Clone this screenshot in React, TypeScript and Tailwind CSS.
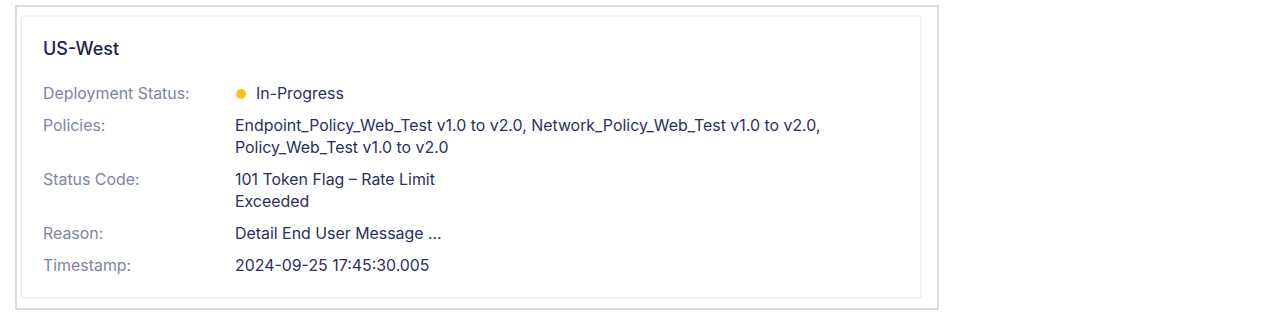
import React from 'react';

const rows: { label: string; value: React.ReactNode }[] = [
  {
    label: 'Deployment Status:',
    value: (
      <span className="flex items-center gap-[10px]">
        <span className="ml-[1px] h-[10px] w-[10px] rounded-full bg-[#f6c21c]" />
        In-Progress
      </span>
    ),
  },
  {
    label: 'Policies:',
    value: 'Endpoint_Policy_Web_Test v1.0 to v2.0, Network_Policy_Web_Test v1.0 to v2.0, Policy_Web_Test v1.0 to v2.0',
  },
  {
    label: 'Status Code:',
    value: <span className="block max-w-[230px]">101 Token Flag – Rate Limit Exceeded</span>,
  },
  { label: 'Reason:', value: 'Detail End User Message ...' },
  { label: 'Timestamp:', value: '2024-09-25 17:45:30.005' },
];

export default function App() {
  return (
    <div className="h-[320px] w-[1276px] bg-white pl-[15px] pt-[5px] font-['Inter',sans-serif]">
      <div className="w-[924px] border-2 border-[#dcdcdc] pb-[9px] pl-[3px] pr-[15px] pt-[8px]">
        <div className="rounded-[4px] border-2 border-[#f0f2f7] px-[21px] pb-[20px] pt-[21px]">
          <h2 className="text-[18px] font-medium leading-[22px] text-[#1d2250]">US-West</h2>
          <div className="mt-[23px] flex flex-col gap-[10px]">
            {rows.map(row => (
              <div key={row.label} className="flex text-[15.9px] leading-[22px]">
                <div className="w-[192px] shrink-0 text-[#80869d]">{row.label}</div>
                <div className="max-w-[650px] text-[#2b3060]">{row.value}</div>
              </div>
            ))}
          </div>
        </div>
      </div>
    </div>
  );
}
